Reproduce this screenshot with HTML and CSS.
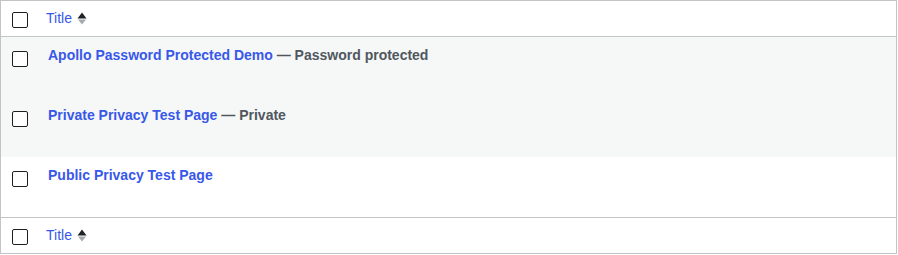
FILE: index.html
```html
<!DOCTYPE html>
<html>
<head>
<meta charset="utf-8">
<link rel="stylesheet" href="styles.css">
</head>
<body>
<table class="list">
  <thead>
    <tr class="head">
      <td class="check"><input type="checkbox" class="cb"></td>
      <th class="col-title"><a class="sort" href="#"><span>Title</span>
        <svg class="ind" width="10" height="13" viewBox="0 0 10 13"><path d="M0.5 6.5 L5 0.5 L9.5 6.5 Z" fill="#1d2327"/><path d="M1 7.5 L5 12.5 L9 7.5 Z" fill="#a7aaad"/></svg></a></th>
    </tr>
  </thead>
  <tbody>
    <tr class="row alt">
      <td class="check"><input type="checkbox" class="cb"></td>
      <td class="title"><a class="row-title" href="#">Apollo Password Protected Demo</a><span class="state"> — Password protected</span></td>
    </tr>
    <tr class="row alt">
      <td class="check"><input type="checkbox" class="cb"></td>
      <td class="title"><a class="row-title" href="#">Private Privacy Test Page</a><span class="state"> — Private</span></td>
    </tr>
    <tr class="row">
      <td class="check"><input type="checkbox" class="cb"></td>
      <td class="title"><a class="row-title" href="#">Public Privacy Test Page</a></td>
    </tr>
  </tbody>
  <tfoot>
    <tr class="head foot">
      <td class="check"><input type="checkbox" class="cb"></td>
      <th class="col-title"><a class="sort" href="#"><span>Title</span>
        <svg class="ind" width="10" height="13" viewBox="0 0 10 13"><path d="M0.5 6.5 L5 0.5 L9.5 6.5 Z" fill="#1d2327"/><path d="M1 7.5 L5 12.5 L9 7.5 Z" fill="#a7aaad"/></svg></a></th>
    </tr>
  </tfoot>
</table>
</body>
</html>
```
FILE: styles.css
```css
html, body {
  margin: 0;
  padding: 0;
  background: #fff;
}
body {
  font-family: "Liberation Sans", Arial, sans-serif;
  font-size: 14px;
  color: #3c434a;
}
.list {
  width: 897px;
  border: 1px solid #c3c4c7;
  border-spacing: 0;
  border-collapse: separate;
  table-layout: fixed;
}
.list td, .list th {
  padding: 0;
  text-align: left;
  font-weight: 400;
  vertical-align: top;
}
.check {
  width: 36px;
}
.cb {
  -webkit-appearance: none;
  appearance: none;
  display: block;
  width: 16px;
  height: 16px;
  margin: 0;
  border: 1px solid #1e1e1e;
  border-radius: 2px;
  background: #fff;
  box-sizing: border-box;
}
.head { height: 36px; }
.head .check .cb { margin: 11px 0 0 11px; }
.foot .check .cb { margin: 11px 0 0 11px; }
.head .col-title { padding: 9px 0 0 9px; }
.foot .col-title { padding: 9px 0 0 9px; }
thead .head td, thead .head th { border-bottom: 1px solid #c3c4c7; }
tfoot .head td, tfoot .head th { border-top: 1px solid #c3c4c7; }
.sort {
  display: inline-flex;
  align-items: center;
  gap: 5px;
  color: #3858e9;
  text-decoration: none;
  font-size: 14px;
  line-height: 17px;
}
.ind { display: block; }
.row { height: 60px; }
.row.alt { background: #f6f7f7; }
.row .check .cb { margin: 14px 0 0 11px; }
.row .title { padding: 10px 10px 0 11px; line-height: 17px; }
.row-title {
  color: #3858e9;
  font-weight: 700;
  text-decoration: none;
  font-size: 14px;
}
.state {
  color: #50575e;
  font-weight: 700;
}
```
